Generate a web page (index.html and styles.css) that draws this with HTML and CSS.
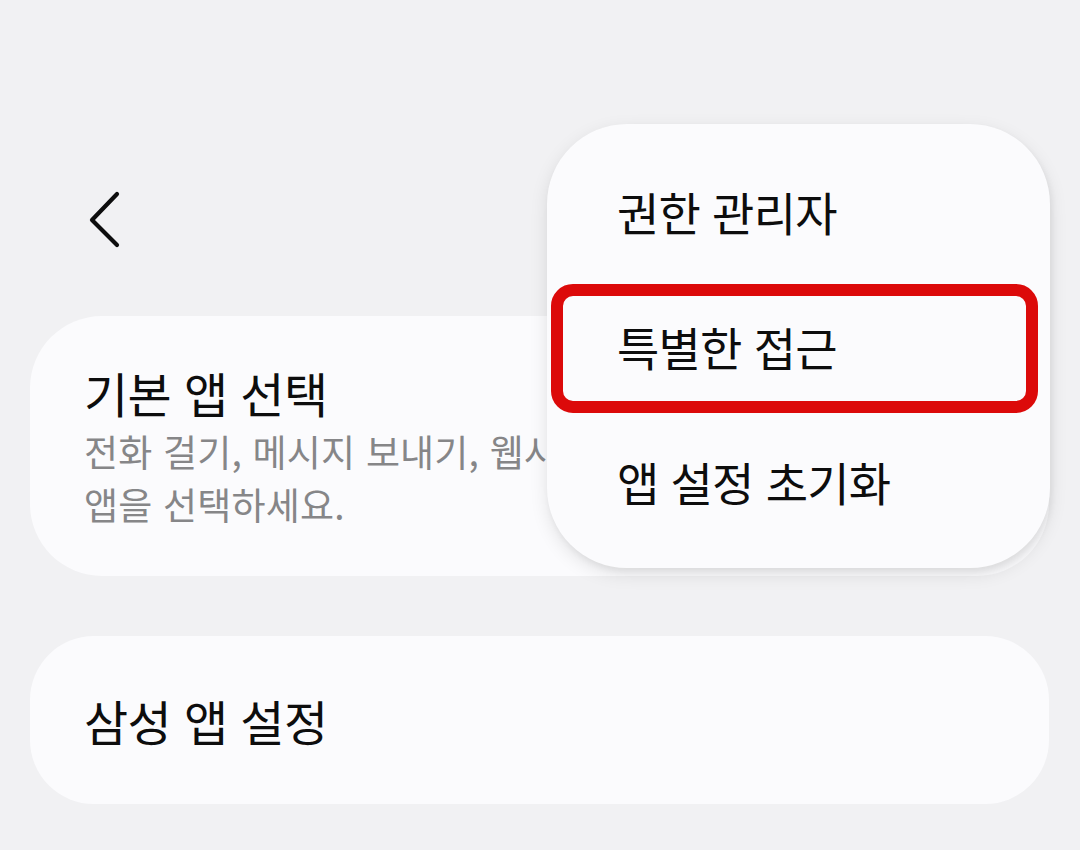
FILE: index.html
```html
<!DOCTYPE html>
<html lang="ko">
<head>
<meta charset="utf-8">
<link rel="stylesheet" href="styles.css">
</head>
<body>
<div class="screen">
  <header class="topbar">
    <svg class="back" width="40" height="60" viewBox="0 0 40 60" aria-label="뒤로">
      <polyline points="31,4 6,30 31,55" fill="none" stroke="#0d0d0d" stroke-width="4.2" stroke-linecap="round" stroke-linejoin="round"/>
    </svg>
  </header>

  <section class="card card-default">
    <div class="card-title">기본 앱 선택</div>
    <div class="card-desc">전화 걸기, 메시지 보내기, 웹사이트 방문 등에 사용할 기본<br>앱을 선택하세요.</div>
  </section>

  <section class="card card-samsung">
    <div class="card-title">삼성 앱 설정</div>
  </section>

  <div class="menu">
    <div class="menu-item">권한 관리자</div>
    <div class="menu-item">특별한 접근<span class="highlight"></span></div>
    <div class="menu-item">앱 설정 초기화</div>
  </div>
</div>
</body>
</html>
```

FILE: styles.css
```css
html, body {
  margin: 0;
  padding: 0;
  background: #f1f1f3;
}

body {
  font-family: "Noto Sans CJK KR", "Noto Sans", sans-serif;
  color: #0d0d0d;
}

.screen {
  position: relative;
  width: 1080px;
  height: 850px;
  overflow: hidden;
}

.topbar {
  height: 316px;
  box-sizing: border-box;
  padding: 190px 0 0 86px;
}

.back {
  display: block;
}

.card {
  margin: 0 31px 0 30px;
  background: #fbfbfd;
  box-sizing: border-box;
  padding-left: 54px;
  display: flex;
  flex-direction: column;
  justify-content: center;
}

.card-default {
  height: 260px;
  border-radius: 72px;
}

.card-samsung {
  margin-top: 60px;
  height: 168px;
  border-radius: 64px;
}

.card-title {
  font-size: 48px;
  line-height: 60px;
  letter-spacing: -0.6px;
  color: #0d0d0d;
}

.card-desc {
  margin-top: 3px;
  font-size: 37px;
  line-height: 53px;
  letter-spacing: 0.2px;
  color: #868688;
}

.menu {
  position: absolute;
  left: 547px;
  top: 124px;
  width: 503px;
  height: 444px;
  box-sizing: border-box;
  padding: 19px 0;
  background: #fbfbfd;
  border-radius: 80px;
  box-shadow: 0 6px 18px rgba(0, 0, 0, 0.10), 2px 4px 6px rgba(0, 0, 0, 0.05);
  display: flex;
  flex-direction: column;
}

.menu-item {
  position: relative;
  height: 136px;
  display: flex;
  align-items: center;
  padding-left: 70px;
  font-size: 46px;
  letter-spacing: -0.8px;
  color: #0d0d0d;
}

.highlight {
  position: absolute;
  left: 4px;
  right: 12px;
  top: 6px;
  height: 129px;
  box-sizing: border-box;
  border: 12px solid #dc0a0a;
  border-radius: 22px;
}
```
